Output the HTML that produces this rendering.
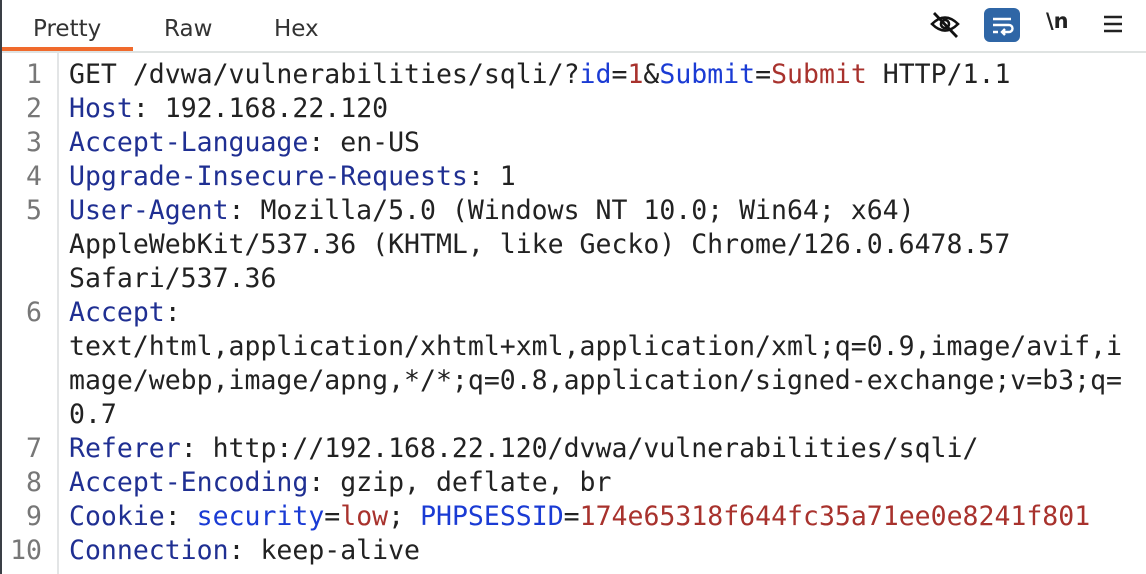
<!DOCTYPE html>
<html><head><meta charset="utf-8"><style>
html,body{margin:0;padding:0;width:1146px;height:574px;overflow:hidden;background:#fff;}
.lb{position:absolute;left:0;top:0;width:2px;height:574px;background:#3a3f46;}
.tabs{position:absolute;top:0;left:2px;right:0;height:51px;border-bottom:2px solid #dfe3e2;font-family:"DejaVu Sans","Liberation Sans",sans-serif;font-size:23px;color:#333;}
.tab{position:absolute;top:16px;}
.ul{position:absolute;left:2px;top:47px;width:131px;height:4px;background:#f06a2c;}
.gut{position:absolute;left:57px;top:53px;width:2px;height:521px;background:#e3e5e6;}
.code{position:absolute;left:0;top:58px;font-family:"DejaVu Sans Mono","Liberation Mono",monospace;font-size:26.5px;line-height:34px;color:#222;}
.n{position:absolute;left:0;width:42px;text-align:right;color:#777;}
.t{position:absolute;left:69px;white-space:pre;}
.row{position:relative;height:34px;}
.k{color:#1f2f92}.c{color:#1a3bd4}.v{color:#a8322d}
</style></head><body>
<div class="lb"></div>
<div class="tabs">
<span class="tab" style="left:31px">Pretty</span>
<span class="tab" style="left:162px">Raw</span>
<span class="tab" style="left:272px">Hex</span>
</div>
<div class="ul"></div>
<svg style="position:absolute;left:928px;top:10px" width="34" height="30" viewBox="0 0 34 30"><path d="M4 14 Q17 1 30 14 Q17 27 4 14Z" fill="none" stroke="#111" stroke-width="2.6"/><circle cx="17" cy="14" r="4" fill="none" stroke="#111" stroke-width="2.6"/><path d="M6 3 L29 27" stroke="#111" stroke-width="2.8"/></svg>
<div style="position:absolute;left:984px;top:8px;width:36px;height:34px;border-radius:6px;background:#2f66a6"></div>
<svg style="position:absolute;left:984px;top:8px" width="36" height="34" viewBox="0 0 36 34"><path d="M9 11H27M9 17H25a3 3 0 0 1 0 7H18M21 21l-3 3 3 3M9 24h5" fill="none" stroke="#fff" stroke-width="2.4"/></svg>
<div style="position:absolute;left:1046px;top:9px;font-family:'DejaVu Sans',sans-serif;font-size:21px;font-weight:bold;color:#222">\n</div>
<svg style="position:absolute;left:1103px;top:14px" width="20" height="20"><path d="M1 3H19M1 10H19M1 17H19" stroke="#222" stroke-width="2.6"/></svg>
<div class="gut"></div>
<div class="code"><div class="row"><span class="n">1</span><span class="t">GET /dvwa/vulnerabilities/sqli/?<span class="c">id</span>=<span class="v">1</span>&amp;<span class="c">Submit</span>=<span class="v">Submit</span> HTTP/1.1</span></div><div class="row"><span class="n">2</span><span class="t"><span class="k">Host</span>: 192.168.22.120</span></div><div class="row"><span class="n">3</span><span class="t"><span class="k">Accept-Language</span>: en-US</span></div><div class="row"><span class="n">4</span><span class="t"><span class="k">Upgrade-Insecure-Requests</span>: 1</span></div><div class="row"><span class="n">5</span><span class="t"><span class="k">User-Agent</span>: Mozilla/5.0 (Windows NT 10.0; Win64; x64)</span></div><div class="row"><span class="t">AppleWebKit/537.36 (KHTML, like Gecko) Chrome/126.0.6478.57</span></div><div class="row"><span class="t">Safari/537.36</span></div><div class="row"><span class="n">6</span><span class="t"><span class="k">Accept</span>:</span></div><div class="row"><span class="t">text/html,application/xhtml+xml,application/xml;q=0.9,image/avif,i</span></div><div class="row"><span class="t">mage/webp,image/apng,*/*;q=0.8,application/signed-exchange;v=b3;q=</span></div><div class="row"><span class="t">0.7</span></div><div class="row"><span class="n">7</span><span class="t"><span class="k">Referer</span>: http://192.168.22.120/dvwa/vulnerabilities/sqli/</span></div><div class="row"><span class="n">8</span><span class="t"><span class="k">Accept-Encoding</span>: gzip, deflate, br</span></div><div class="row"><span class="n">9</span><span class="t"><span class="k">Cookie</span>: <span class="c">security</span>=<span class="v">low</span>; <span class="c">PHPSESSID</span>=<span class="v">174e65318f644fc35a71ee0e8241f801</span></span></div><div class="row"><span class="n">10</span><span class="t"><span class="k">Connection</span>: keep-alive</span></div></div>
</body></html>
